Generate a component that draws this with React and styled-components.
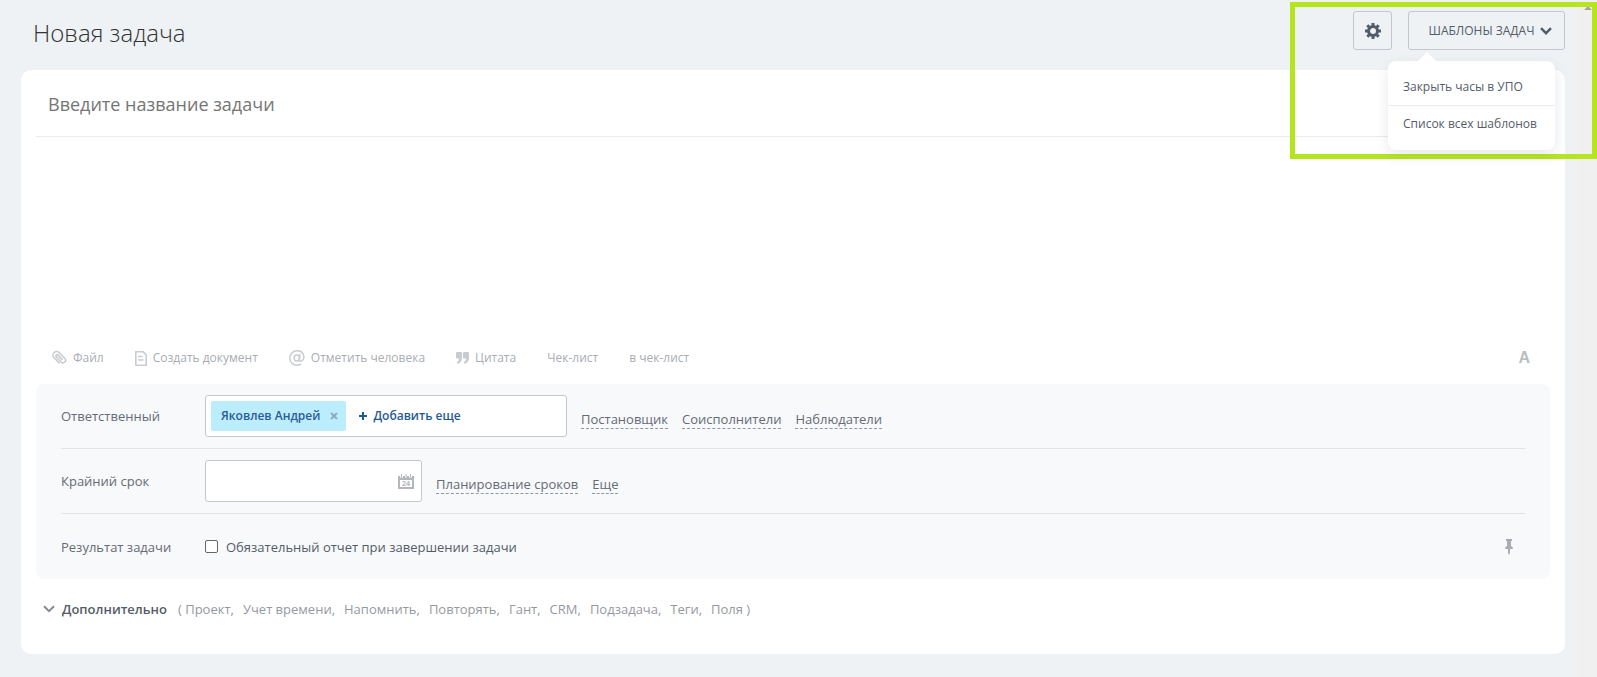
import React, { useState } from 'react';
import styled, { createGlobalStyle } from 'styled-components';

const GlobalStyle = createGlobalStyle`
  * {
    box-sizing: border-box;
  }
  body {
    margin: 0;
    background: #eef2f4;
    color: #535c69;
    font-family: 'Open Sans', 'Noto Sans', sans-serif;
    font-size: 13px;
    line-height: 20px;
  }
  button, input, textarea {
    font: inherit;
    color: inherit;
  }
  button {
    padding: 0;
    border: 0;
    background: none;
    cursor: pointer;
  }
  svg {
    display: block;
    flex: none;
  }
`;

const Page = styled.div`
  position: relative;
  display: flex;
  min-height: 100vh;
`;

const Main = styled.main`
  flex: 1;
  min-width: 0;
  padding: 0 13px 20px 21px;
`;

const ScrollTrack = styled.div`
  display: flex;
  justify-content: center;
  width: 19px;
  padding-top: 6px;
  background: #f0f0f0;
`;

const Highlight = styled.div`
  position: absolute;
  top: 2px;
  right: 0;
  width: 307px;
  height: 157px;
  border: 5px solid #b5e61d;
  pointer-events: none;
`;

const Header = styled.header`
  display: flex;
  align-items: center;
  height: 70px;
  padding: 0 0 9px 12px;
`;

const PageTitle = styled.h1`
  flex: 1;
  margin: 0;
  padding-top: 4px;
  color: #333;
  font-size: 24px;
  font-weight: 300;
  line-height: 32px;
`;

const HeaderButton = styled.button`
  display: flex;
  align-items: center;
  justify-content: center;
  gap: 6px;
  width: ${(p) => p.$width}px;
  height: 39px;
  padding-left: ${(p) => (p.$labelled ? 8 : 0)}px;
  border: 1px solid #c3c8ce;
  border-radius: 3px;
  font-size: 12px;
  font-weight: 500;
`;

const MenuAnchor = styled.div`
  position: relative;
  margin-left: 16px;
`;

const Menu = styled.div`
  position: absolute;
  top: 50px;
  right: 10px;
  z-index: 1;
  width: 167px;
  padding: 7px 0 8px;
  border-radius: 8px;
  background: #fff;
  box-shadow: 0 5px 14px rgba(83, 92, 105, 0.14);
  &::before {
    content: '';
    position: absolute;
    top: -9px;
    left: 30px;
    border: 9px solid transparent;
    border-top: 0;
    border-bottom-color: #fff;
  }
`;

const MenuItem = styled.button`
  display: block;
  width: 100%;
  height: 37px;
  padding-left: 15px;
  font-size: 12px;
  text-align: left;
  white-space: nowrap;
  & + & {
    border-top: 1px solid #eaebec;
  }
`;

const Card = styled.form`
  padding: 0 15px;
  border-radius: 10px;
  background: #fff;
`;

const TitleInput = styled.input`
  display: block;
  width: 100%;
  height: 67px;
  padding: 2px 12px 0;
  border: 0;
  border-bottom: 1px solid #eaebec;
  background: none;
  font-size: 18px;
  outline: none;
  &::placeholder {
    color: #757575;
  }
`;

const Description = styled.textarea`
  display: block;
  width: 100%;
  height: 200px;
  padding: 12px;
  border: 0;
  outline: none;
  resize: none;
`;

const Toolbar = styled.div`
  display: flex;
  align-items: center;
  gap: 31px;
  height: 42px;
  margin-bottom: 5px;
  padding: 0 20px 0 16px;
`;

const ToolButton = styled.button`
  display: flex;
  align-items: center;
  gap: 6px;
  color: #a8adb4;
  font-size: 12px;
  svg {
    color: #c8cbcf;
  }
`;

const FontButton = styled(ToolButton)`
  margin-left: auto;
  color: #b9bdc3;
  font-family: 'Liberation Sans', sans-serif;
  font-size: 16px;
  font-weight: 700;
`;

const Panel = styled.div`
  padding: 0 25px;
  border-radius: 8px;
  background: #f8f9fb;
`;

const Row = styled.div`
  display: flex;
  align-items: center;
  height: 65px;
  border-bottom: 1px solid #e2e5e8;
  &:last-child {
    border-bottom: 0;
  }
`;

const Label = styled.label`
  width: 144px;
  color: #656b76;
`;

const Field = styled.div`
  display: flex;
  align-items: center;
  width: ${(p) => p.$width}px;
  height: 42px;
  padding: 0 7px 0 5px;
  border: 1px solid #c3c8ce;
  border-radius: 3px;
  background: #fff;
`;

const Tag = styled.span`
  display: flex;
  align-items: center;
  gap: 10px;
  height: 30px;
  padding: 0 8px 0 10px;
  border-radius: 2px;
  background: #bcedfc;
  color: #2b5c97;
  font-size: 12px;
  font-weight: 600;
  white-space: nowrap;
`;

const AddButton = styled.button`
  display: flex;
  align-items: center;
  gap: 6px;
  margin-left: 13px;
  color: #1f5a94;
  font-size: 12px;
  font-weight: 600;
`;

const DateInput = styled.input`
  flex: 1;
  min-width: 0;
  border: 0;
  background: none;
  outline: none;
`;

const Links = styled.div`
  display: flex;
  gap: 14px;
  padding: 6px 0 0 14px;
`;

const DashedLink = styled.a`
  border-bottom: 1px dashed #9097a0;
  color: #656b76;
  line-height: 18px;
  text-decoration: none;
`;

const CheckLabel = styled.label`
  display: flex;
  align-items: center;
  flex: 1;
  gap: 8px;
`;

const Checkbox = styled.input`
  appearance: none;
  width: 13px;
  height: 13px;
  margin: 0;
  border: 1px solid #666;
  border-radius: 2px;
  background: #fff;
  &:checked {
    background: #2b5c97;
  }
`;

const PinButton = styled.button`
  margin-right: 12px;
`;

const More = styled.div`
  display: flex;
  align-items: center;
  padding: 20px 0 35px 7px;
`;

const MoreToggle = styled.button`
  display: flex;
  align-items: center;
  gap: 7px;
  font-weight: 600;
`;

const MoreList = styled.div`
  display: flex;
  gap: 9px;
  margin-left: 11px;
  color: #95999f;
`;

const Chevron = ({ color = '#525c69', width = 2 }) => (
  <svg width="12" height="8" viewBox="0 0 12 8" fill="none" stroke={color} strokeWidth={width}>
    <path d="M1 1.2 6 6.2 11 1.2" />
  </svg>
);

const GearIcon = () => (
  <svg width="16" height="16" viewBox="0 0 16 16" fill="none" stroke="#525c69">
    <circle cx="8" cy="8" r="4.5" strokeWidth="3" />
    <path
      d="M8 0v3M8 13v3M0 8h3M13 8h3M2.3 2.3l2 2M11.7 11.7l2 2M13.7 2.3l-2 2M4.3 11.7l-2 2"
      strokeWidth="3"
    />
  </svg>
);

const ClipIcon = () => (
  <svg width="15" height="16" viewBox="0 0 24 24" fill="none" stroke="currentColor" strokeWidth="2.5" strokeLinecap="round">
    <path d="m16.200 14.200-6.500-6.800a1.900 1.900 0 0 0-2.800 2.700l8 8.300a3.900 3.900 0 0 0 5.700-5.500L11.400 3.300a5.700 5.700 0 0 0-8.200 8l8.200 8.500" />
  </svg>
);

const DocIcon = () => (
  <svg width="12" height="15" viewBox="0 0 12 15" fill="none" stroke="currentColor" strokeWidth="1.6">
    <path d="M.8.8h7.4l3 3.2v10.2H.8z" strokeLinejoin="round" />
    <path d="M3 5.5h4.5M3 9h5.5" strokeWidth="1.4" />
  </svg>
);

const AtIcon = () => (
  <svg width="16" height="16" viewBox="0 0 16 16" fill="none" stroke="currentColor" strokeWidth="1.5" strokeLinecap="round">
    <ellipse cx="7.8" cy="8" rx="2.7" ry="3.1" />
    <path d="m11 4.8-.7 4.7c-.2 2.1 2 2 3.2.8 1.1-1.2 1.6-3 1.2-4.7C13.9 2.6 11.300.8 8.100.8 4 .8.8 4 .8 8.100.8 12.200 3.900 15.200 8 15.200c1.500 0 2.700-.3 3.800-.9" />
  </svg>
);

const QuoteIcon = () => (
  <svg width="13" height="12" viewBox="0 0 13 12" fill="currentColor">
    <path d="M1 0h4q1 0 1 1v4.500Q6 10.500 1.500 12L.8 10.300Q3 9 3.200 6.500H1q-1 0-1-1V1q0-1 1-1zM8 0h4q1 0 1 1v4.500Q13 10.500 8.500 12l-.7-1.700Q10 9 10.200 6.500H8q-1 0-1-1V1q0-1 1-1z" />
  </svg>
);

const CrossIcon = () => (
  <svg width="8" height="8" viewBox="0 0 8 8" stroke="#8aaebb" strokeWidth="2">
    <path d="m1 1 6 6M7 1 1 7" />
  </svg>
);

const PlusIcon = () => (
  <svg width="8" height="8" viewBox="0 0 8 8" stroke="#1f5a94" strokeWidth="2">
    <path d="M4 0v8M0 4h8" />
  </svg>
);

const CalendarIcon = () => (
  <svg width="16" height="15" viewBox="0 0 16 15" fill="#b4b7ba">
    <path
      d="M0 2h2v1.500h3V2h2v1.500h2V2h2v1.500h3V2h2v13H0zM2 6v7h12V6z"
      fillRule="evenodd"
    />
    <path d="M3 0h1v3H3zM7.500 0h1v3h-1zM12 0h1v3h-1z" />
    <text x="8" y="12" fontSize="7" fontWeight="700" textAnchor="middle">24</text>
  </svg>
);

const PinIcon = () => (
  <svg width="8" height="16" viewBox="0 0 8 16" fill="#a9adb2">
    <path d="M1 0h6v2H6v5q2 .5 2 3H5v4l-1 2-1-2v-4H0q0-2.500 2-3V2H1z" />
  </svg>
);

const tools = [
  { label: 'Файл', icon: <ClipIcon /> },
  { label: 'Создать документ', icon: <DocIcon /> },
  { label: 'Отметить человека', icon: <AtIcon /> },
  { label: 'Цитата', icon: <QuoteIcon /> },
  { label: 'Чек-лист' },
  { label: 'в чек-лист' },
];

const extras = ['( Проект,', 'Учет времени,', 'Напомнить,', 'Повторять,', 'Гант,', 'CRM,', 'Подзадача,', 'Теги,', 'Поля )'];

const App = () => {
  const [menuOpen, setMenuOpen] = useState(true);
  const [report, setReport] = useState(false);

  return (
    <>
      <GlobalStyle />
      <Page>
        <Main>
          <Header>
            <PageTitle>Новая задача</PageTitle>
            <HeaderButton type="button" $width={39} aria-label="Настройки">
              <GearIcon />
            </HeaderButton>
            <MenuAnchor>
              <HeaderButton type="button" $width={157} $labelled onClick={() => setMenuOpen(!menuOpen)}>
                ШАБЛОНЫ ЗАДАЧ
                <Chevron width={2.4} />
              </HeaderButton>
              {menuOpen && (
                <Menu>
                  <MenuItem type="button">Закрыть часы в УПО</MenuItem>
                  <MenuItem type="button">Список всех шаблонов</MenuItem>
                </Menu>
              )}
            </MenuAnchor>
          </Header>
          <Card onSubmit={(e) => e.preventDefault()}>
            <TitleInput placeholder="Введите название задачи" aria-label="Название задачи" />
            <Description aria-label="Описание задачи" />
            <Toolbar>
              {tools.map((tool) => (
                <ToolButton type="button" key={tool.label}>
                  {tool.icon}
                  {tool.label}
                </ToolButton>
              ))}
              <FontButton type="button">A</FontButton>
            </Toolbar>
            <Panel>
              <Row>
                <Label as="span">Ответственный</Label>
                <Field $width={362}>
                  <Tag>
                    Яковлев Андрей
                    <button type="button" aria-label="Удалить">
                      <CrossIcon />
                    </button>
                  </Tag>
                  <AddButton type="button">
                    <PlusIcon />
                    Добавить еще
                  </AddButton>
                </Field>
                <Links>
                  <DashedLink href="#originator">Постановщик</DashedLink>
                  <DashedLink href="#accomplices">Соисполнители</DashedLink>
                  <DashedLink href="#auditors">Наблюдатели</DashedLink>
                </Links>
              </Row>
              <Row>
                <Label htmlFor="deadline">Крайний срок</Label>
                <Field $width={217}>
                  <DateInput id="deadline" type="text" />
                  <CalendarIcon />
                </Field>
                <Links>
                  <DashedLink href="#planning">Планирование сроков</DashedLink>
                  <DashedLink href="#more">Еще</DashedLink>
                </Links>
              </Row>
              <Row>
                <Label as="span">Результат задачи</Label>
                <CheckLabel>
                  <Checkbox type="checkbox" checked={report} onChange={(e) => setReport(e.target.checked)} />
                  Обязательный отчет при завершении задачи
                </CheckLabel>
                <PinButton type="button" aria-label="Закрепить">
                  <PinIcon />
                </PinButton>
              </Row>
            </Panel>
            <More>
              <MoreToggle type="button">
                <Chevron color="#858b94" />
                Дополнительно
              </MoreToggle>
              <MoreList>
                {extras.map((item) => (
                  <span key={item}>{item}</span>
                ))}
              </MoreList>
            </More>
          </Card>
        </Main>
        <ScrollTrack>
          <svg width="8" height="4" viewBox="0 0 8 4" fill="#a3a3a3">
            <path d="M4 0 8 4H0z" />
          </svg>
        </ScrollTrack>
        <Highlight />
      </Page>
    </>
  );
};

export default App;
